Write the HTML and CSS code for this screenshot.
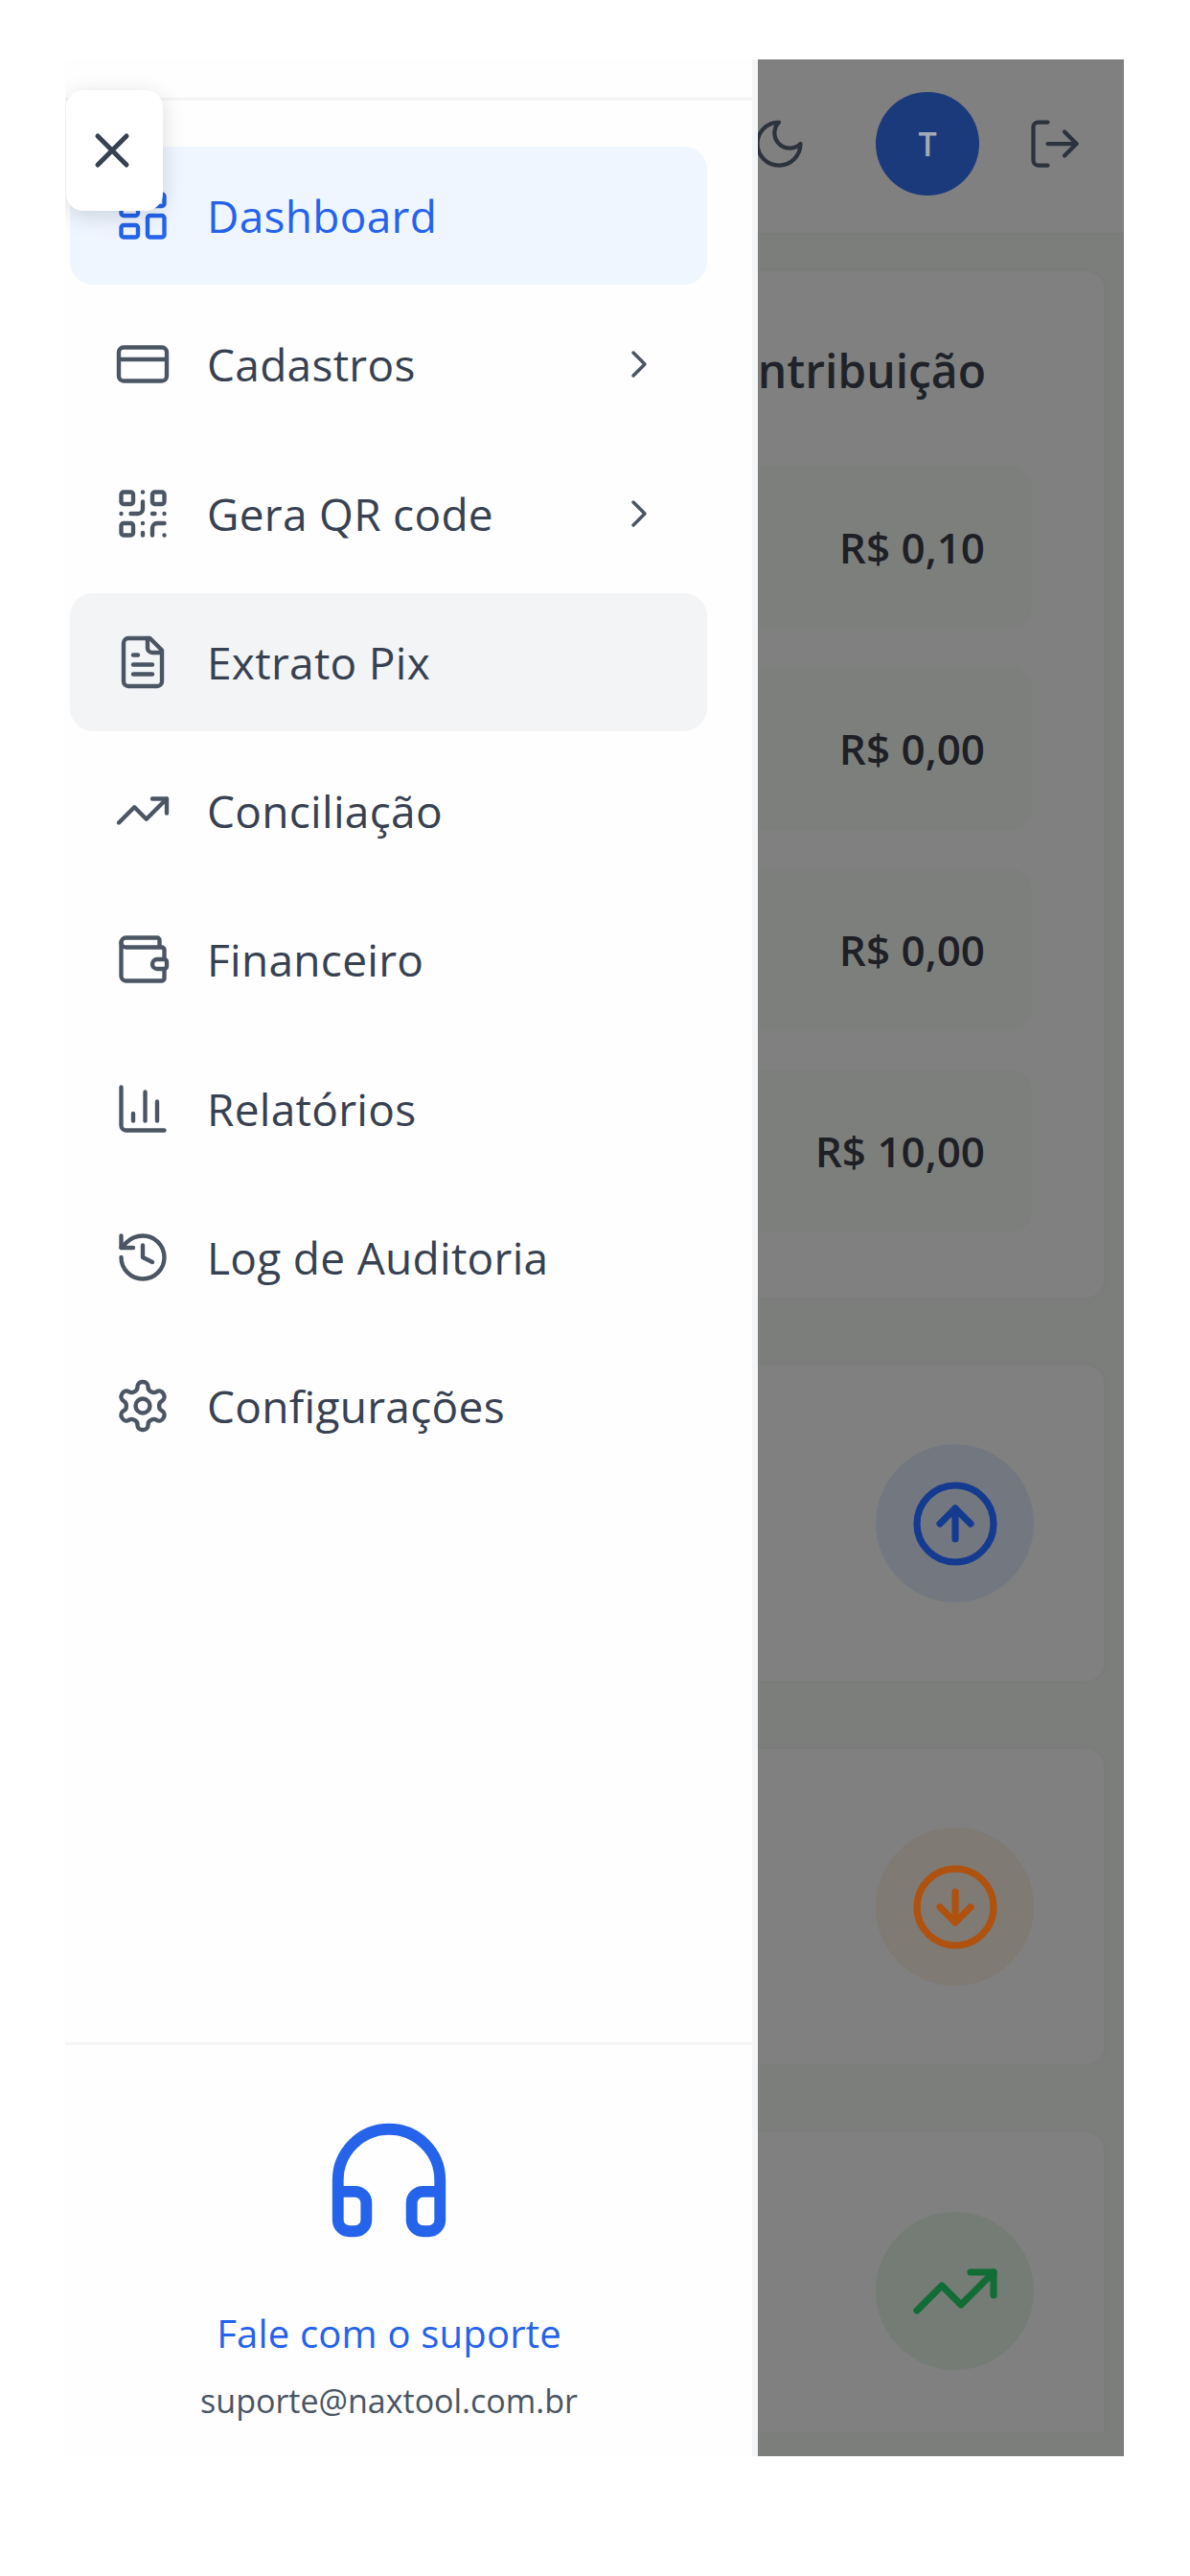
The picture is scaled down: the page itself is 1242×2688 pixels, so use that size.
FILE: index.html
```html
<!DOCTYPE html>
<html lang="pt-BR">
<head>
    <meta charset="UTF-8">
    <meta name="viewport" content="width=device-width, initial-scale=1.0">
    <title>Dashboard</title>
    <link rel="stylesheet" href="styles.css">
</head>
<body>
    <div class="screen">
        <!-- page behind the drawer -->
        <div class="page">
            <header class="topbar">
                <svg class="icon topbar-icon moon" viewBox="0 0 24 24"><path d="M12 3a6 6 0 0 0 9 9 9 9 0 1 1-9-9Z"/></svg>
                <div class="avatar">T</div>
                <svg class="icon topbar-icon" viewBox="0 0 24 24"><path d="M9 21H5a2 2 0 0 1-2-2V5a2 2 0 0 1 2-2h4"/><path d="m16 17 5-5-5-5"/><path d="M21 12H9"/></svg>
            </header>

            <section class="card card-list">
                <h2 class="card-title">Contribuição</h2>
                <div class="value-row">R$ 0,10</div>
                <div class="value-row">R$ 0,00</div>
                <div class="value-row">R$ 0,00</div>
                <div class="value-row">R$ 10,00</div>
            </section>

            <section class="card card-stat">
                <div class="stat-circle blue">
                    <svg class="icon stat-icon" viewBox="0 0 24 24"><circle cx="12" cy="12" r="10"/><path d="m16 12-4-4-4 4"/><path d="M12 16V8"/></svg>
                </div>
            </section>
            <section class="card card-stat">
                <div class="stat-circle orange">
                    <svg class="icon stat-icon" viewBox="0 0 24 24"><circle cx="12" cy="12" r="10"/><path d="M12 8v8"/><path d="m8 12 4 4 4-4"/></svg>
                </div>
            </section>
            <section class="card card-stat card-last">
                <div class="stat-circle green">
                    <svg class="icon stat-icon" viewBox="0 0 24 24"><path d="M22 7 13.5 15.5 8.5 10.5 2 17"/><path d="M16 7h6v6"/></svg>
                </div>
            </section>
        </div>

        <!-- drawer -->
        <aside class="drawer">
            <div class="drawer-head"></div>
            <nav class="nav">
                <a class="nav-item active">
                    <svg class="icon nav-icon" viewBox="0 0 24 24"><rect x="3" y="3" width="7" height="9" rx="1"/><rect x="14" y="3" width="7" height="5" rx="1"/><rect x="14" y="12" width="7" height="9" rx="1"/><rect x="3" y="16" width="7" height="5" rx="1"/></svg>
                    <span>Dashboard</span>
                </a>
                <a class="nav-item">
                    <svg class="icon nav-icon" viewBox="0 0 24 24"><rect x="2" y="5" width="20" height="14" rx="2"/><path d="M2 10h20"/></svg>
                    <span>Cadastros</span>
                    <svg class="icon chevron" viewBox="0 0 24 24"><path d="m9 18 6-6-6-6"/></svg>
                </a>
                <a class="nav-item">
                    <svg class="icon nav-icon" viewBox="0 0 24 24"><rect x="3" y="3" width="5" height="5" rx="1"/><rect x="16" y="3" width="5" height="5" rx="1"/><rect x="3" y="16" width="5" height="5" rx="1"/><path d="M21 16h-3a2 2 0 0 0-2 2v3"/><path d="M21 21v.01"/><path d="M12 7v3a2 2 0 0 1-2 2H7"/><path d="M3 12h.01"/><path d="M12 3h.01"/><path d="M12 16v.01"/><path d="M16 12h1"/><path d="M21 12v.01"/><path d="M12 21v-1"/></svg>
                    <span>Gera QR code</span>
                    <svg class="icon chevron" viewBox="0 0 24 24"><path d="m9 18 6-6-6-6"/></svg>
                </a>
                <a class="nav-item hover">
                    <svg class="icon nav-icon" viewBox="0 0 24 24"><path d="M15 2H6a2 2 0 0 0-2 2v16a2 2 0 0 0 2 2h12a2 2 0 0 0 2-2V7Z"/><path d="M14 2v4a2 2 0 0 0 2 2h4"/><path d="M10 9H8"/><path d="M16 13H8"/><path d="M16 17H8"/></svg>
                    <span>Extrato Pix</span>
                </a>
                <a class="nav-item">
                    <svg class="icon nav-icon" viewBox="0 0 24 24"><path d="M22 7 13.5 15.5 8.5 10.5 2 17"/><path d="M16 7h6v6"/></svg>
                    <span>Conciliação</span>
                </a>
                <a class="nav-item">
                    <svg class="icon nav-icon" viewBox="0 0 24 24"><path d="M19 7V4a1 1 0 0 0-1-1H5a2 2 0 0 0 0 4h15a1 1 0 0 1 1 1v4h-3a2 2 0 0 0 0 4h3a1 1 0 0 0 1-1v-2a1 1 0 0 0-1-1"/><path d="M3 5v14a2 2 0 0 0 2 2h15a1 1 0 0 0 1-1v-4"/></svg>
                    <span>Financeiro</span>
                </a>
                <a class="nav-item">
                    <svg class="icon nav-icon" viewBox="0 0 24 24"><path d="M3 3v16a2 2 0 0 0 2 2h16"/><path d="M18 17V9"/><path d="M13 17V5"/><path d="M8 17v-3"/></svg>
                    <span>Relatórios</span>
                </a>
                <a class="nav-item">
                    <svg class="icon nav-icon" viewBox="0 0 24 24"><path d="M3 12a9 9 0 1 0 9-9 9.75 9.75 0 0 0-6.74 2.74L3 8"/><path d="M3 3v5h5"/><path d="M12 7v5l4 2"/></svg>
                    <span>Log de Auditoria</span>
                </a>
                <a class="nav-item">
                    <svg class="icon nav-icon" viewBox="0 0 24 24"><path d="M12.22 2h-.44a2 2 0 0 0-2 2v.18a2 2 0 0 1-1 1.73l-.43.25a2 2 0 0 1-2 0l-.15-.08a2 2 0 0 0-2.73.73l-.22.38a2 2 0 0 0 .73 2.73l.15.1a2 2 0 0 1 1 1.72v.51a2 2 0 0 1-1 1.74l-.15.09a2 2 0 0 0-.73 2.73l.22.38a2 2 0 0 0 2.73.73l.15-.08a2 2 0 0 1 2 0l.43.25a2 2 0 0 1 1 1.73V20a2 2 0 0 0 2 2h.44a2 2 0 0 0 2-2v-.18a2 2 0 0 1 1-1.73l.43-.25a2 2 0 0 1 2 0l.15.08a2 2 0 0 0 2.73-.73l.22-.39a2 2 0 0 0-.73-2.73l-.15-.08a2 2 0 0 1-1-1.74v-.5a2 2 0 0 1 1-1.74l.15-.09a2 2 0 0 0 .73-2.73l-.22-.38a2 2 0 0 0-2.73-.73l-.15.08a2 2 0 0 1-2 0l-.43-.25a2 2 0 0 1-1-1.73V4a2 2 0 0 0-2-2z"/><circle cx="12" cy="12" r="3"/></svg>
                    <span>Configurações</span>
                </a>
            </nav>
            <footer class="support">
                <svg class="icon support-icon" viewBox="0 0 24 24"><path d="M3 14h3a2 2 0 0 1 2 2v3a2 2 0 0 1-2 2H5a2 2 0 0 1-2-2v-7a9 9 0 0 1 18 0v7a2 2 0 0 1-2 2h-1a2 2 0 0 1-2-2v-3a2 2 0 0 1 2-2h3"/></svg>
                <a class="support-link">Fale com o suporte</a>
                <p class="support-mail">suporte@naxtool.com.br</p>
            </footer>
        </aside>

        <button class="close-btn" type="button">
            <svg class="icon close-icon" viewBox="0 0 24 24"><path d="M18 6 6 18"/><path d="m6 6 12 12"/></svg>
        </button>
    </div>
</body>
</html>
```

FILE: styles.css
```css
* {
    margin: 0;
    padding: 0;
    box-sizing: border-box;
    font-family: 'Open Sans', 'Noto Sans', sans-serif;
}
body {
    background-color: white;
    height: 2688px;
    overflow: hidden;
    padding: 62px 69px 0 68px;
}
.icon {
    fill: none;
    stroke: currentColor;
    stroke-width: 2;
    stroke-linecap: round;
    stroke-linejoin: round;
    flex-shrink: 0;
}

.screen {
    position: relative;
    width: 1105px;
    height: 2501px;
    overflow: hidden;
    background-color: #7c7e7c;
}
.page {
    display: flex;
    flex-direction: column;
    align-items: flex-end;
    padding-right: 18px;
}
.topbar {
    display: flex;
    align-items: center;
    width: 1105px;
    margin-right: -18px;
    height: 183px;
    padding: 0 42px 6px 0;
    justify-content: flex-end;
    background-color: #808080;
    border-bottom: 2px solid #797a79;
    color: #2d333d;
}
.topbar-icon {
    width: 60px;
    height: 60px;
    stroke-width: 1.7;
}
.avatar {
    width: 108px;
    height: 108px;
    margin: 0 49px 0 71px;
    border-radius: 50%;
    background-color: #1b3a7c;
    color: #a3abb8;
    font-size: 34px;
    font-weight: 600;
    display: flex;
    align-items: center;
    justify-content: center;
}
.card {
    width: 700px;
    background-color: #808080;
    border: 3px solid #7b7c7b;
    border-radius: 22px;
}
.card-list {
    height: 1077px;
    margin-top: 35px;
    padding: 0 75px 0 0;
}
.card-title {
    font-size: 48px;
    font-weight: 600;
    color: #1f2329;
    text-align: right;
    line-height: 66px;
    margin: 71px 48px 66px 0;
}
.value-row {
    height: 170px;
    margin-bottom: 40px;
    border-radius: 22px;
    background-color: #7d7f7d;
    color: #1e2026;
    font-size: 44px;
    font-weight: 600;
    display: flex;
    align-items: center;
    justify-content: flex-end;
    padding-right: 49px;
}
.card-stat {
    height: 335px;
    margin-top: 65px;
    display: flex;
    align-items: center;
    justify-content: flex-end;
    padding-right: 73px;
}
.card-last {
    height: 316px;
    align-items: flex-start;
    padding-top: 83px;
    border-bottom: none;
    border-radius: 22px 22px 0 0;
}
.stat-circle {
    width: 165px;
    height: 165px;
    border-radius: 50%;
    display: flex;
    align-items: center;
    justify-content: center;
}
.stat-icon {
    width: 96px;
    height: 96px;
    stroke-width: 1.8;
}
.blue {
    background-color: #737880;
    color: #153b91;
}
.orange {
    background-color: #7f7a73;
    color: #b0520f;
}
.green {
    background-color: #757c76;
    color: #116c36;
}

.drawer {
    position: absolute;
    top: 0;
    left: 0;
    width: 723px;
    height: 100%;
    background-color: #fefefe;
    border-right: 6px solid #f4f5f7;
    display: flex;
    flex-direction: column;
}
.drawer-head {
    height: 43px;
    border-bottom: 3px solid #f3f4f6;
    flex-shrink: 0;
}
.nav {
    flex: 1;
    display: flex;
    flex-direction: column;
    gap: 11.3px;
    padding: 48px 47px 0 5px;
}
.nav-item {
    display: flex;
    align-items: center;
    height: 144px;
    padding: 0 47px 0 46px;
    border-radius: 24px;
    color: #374151;
    font-size: 46px;
    font-weight: 500;
    letter-spacing: 0.3px;
}
.nav-item span {
    flex: 1;
    margin-left: 37px;
}
.nav-icon {
    width: 60px;
    height: 60px;
    stroke-width: 1.75;
    color: #4b5563;
}
.active {
    background-color: #eff6ff;
    color: #2563eb;
}
.active .nav-icon {
    color: #2563eb;
}
.hover {
    background-color: #f3f4f6;
}
.chevron {
    width: 48px;
    height: 48px;
    stroke-width: 1.75;
    color: #4b5563;
}
.support {
    height: 432px;
    border-top: 3px solid #f3f4f6;
    display: flex;
    flex-direction: column;
    align-items: center;
    flex-shrink: 0;
    padding-right: 41px;
}
.support-icon {
    width: 142px;
    height: 142px;
    margin-top: 70px;
    color: #2563eb;
}
.support-link {
    color: #2563eb;
    font-size: 40px;
    font-weight: 500;
    letter-spacing: 0.2px;
    line-height: 52px;
    margin-top: 63px;
}
.support-mail {
    color: #4b5563;
    font-size: 34px;
    line-height: 44px;
    margin-top: 22px;
}

.close-btn {
    position: absolute;
    top: 32px;
    left: 1px;
    width: 101px;
    height: 126px;
    border: none;
    padding-right: 5px;
    border-radius: 18px;
    background-color: white;
    box-shadow: 0 6px 24px rgba(0, 0, 0, 0.14);
    color: #374151;
    display: flex;
    align-items: center;
    justify-content: center;
}
.close-icon {
    width: 60px;
    height: 60px;
}
```
